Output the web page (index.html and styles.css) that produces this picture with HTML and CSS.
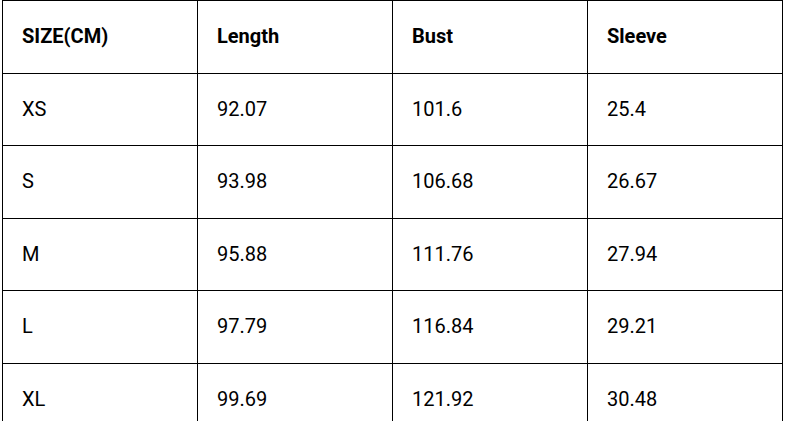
FILE: index.html
```html
<!DOCTYPE html>
<html>
<head>
<meta charset="utf-8">
<link rel="stylesheet" href="styles.css">
</head>
<body>
<table class="size-table">
  <thead>
    <tr><th>SIZE(CM)</th><th>Length</th><th>Bust</th><th>Sleeve</th></tr>
  </thead>
  <tbody>
    <tr><td>XS</td><td>92.07</td><td>101.6</td><td>25.4</td></tr>
    <tr><td>S</td><td>93.98</td><td>106.68</td><td>26.67</td></tr>
    <tr><td>M</td><td>95.88</td><td>111.76</td><td>27.94</td></tr>
    <tr><td>L</td><td>97.79</td><td>116.84</td><td>29.21</td></tr>
    <tr><td>XL</td><td>99.69</td><td>121.92</td><td>30.48</td></tr>
  </tbody>
</table>
</body>
</html>
```
FILE: styles.css
```css
html, body {
  margin: 0;
  padding: 0;
  background: #fff;
}
body {
  padding: 0 0 0 2px;
  font-family: Roboto, "Liberation Sans", sans-serif;
  color: #000;
}
.size-table {
  border-collapse: collapse;
  width: 781px;
  table-layout: fixed;
  font-size: 20px;
}
.size-table th,
.size-table td {
  border: 1px solid #000;
  padding: 20px 19px;
  line-height: 31.6px;
  text-align: left;
  vertical-align: middle;
}
.size-table th {
  font-weight: 700;
}
.size-table td {
  font-weight: 400;
}
```
